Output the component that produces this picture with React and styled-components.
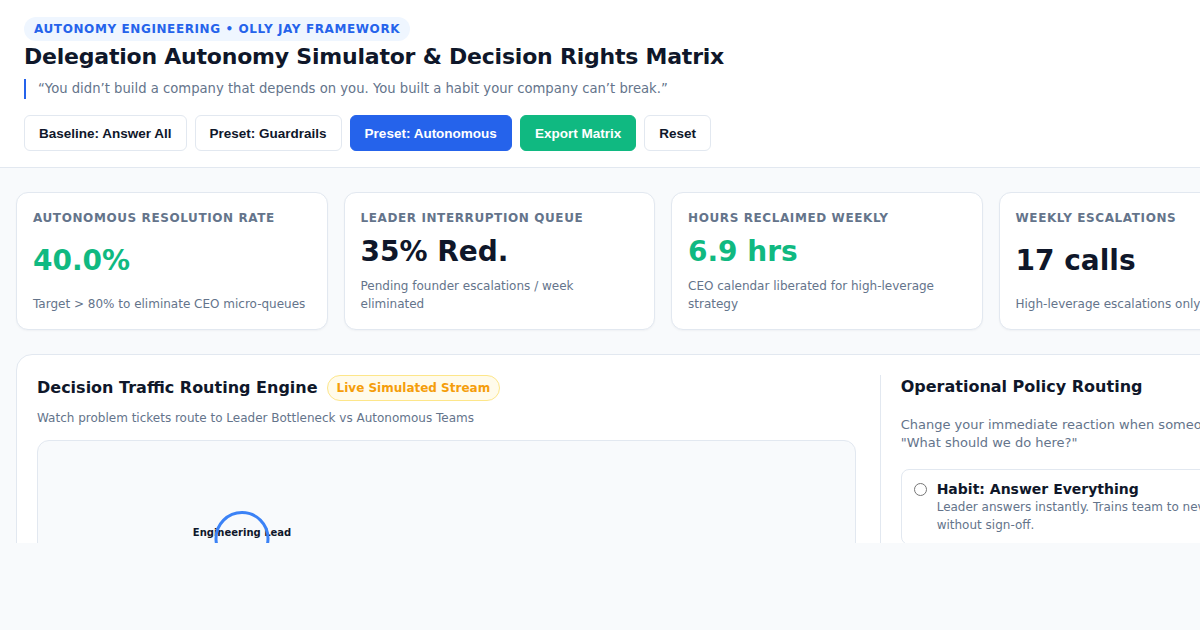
import React from "react";
import styled, { createGlobalStyle } from "styled-components";

const GlobalStyle = createGlobalStyle`
  html, body { margin: 0; padding: 0; background: #f8fafc; overflow: hidden; }
  body { font-family: "DejaVu Sans", "Noto Sans", sans-serif; color: #0f172a; }
  * { box-sizing: border-box; }
`;

const Page = styled.div`
  width: 1326px;
  height: 543px;
  overflow: hidden;
  background: #f8fafc;
`;

const Header = styled.header`
  background: #ffffff;
  border-bottom: 1px solid #e2e8f0;
  padding: 17px 24px 16px;
  display: flex;
  flex-direction: column;
  align-items: flex-start;
`;

const Eyebrow = styled.span`
  display: inline-block;
  padding: 4px 10px;
  border-radius: 999px;
  background: #eff6ff;
  color: #2563eb;
  font-size: 12px;
  line-height: 16px;
  font-weight: 700;
  letter-spacing: 0.05em;
  text-transform: uppercase;
`;

const Title = styled.h1`
  margin: 1px 0 0;
  font-size: 22px;
  line-height: 30px;
  font-weight: 700;
  letter-spacing: -0.01em;
  color: #0f172a;
`;

const Quote = styled.p`
  margin: 7px 0 0;
  border-left: 2px solid #2563eb;
  padding-left: 12px;
  font-size: 13.2px;
  line-height: 20px;
  color: #64748b;
`;

const ButtonRow = styled.div`
  display: flex;
  gap: 8px;
  margin-top: 16px;
`;

const Button = styled.button`
  height: 36px;
  padding: 0 14px;
  border-radius: 6px;
  font-family: "Liberation Sans", Arial, sans-serif;
  font-size: 13.5px;
  font-weight: 700;
  cursor: pointer;
  border: 1px solid
    ${(p) => (p.$variant === "blue" ? "#2563eb" : p.$variant === "green" ? "#10b981" : "#e2e8f0")};
  background: ${(p) => (p.$variant === "blue" ? "#2563eb" : p.$variant === "green" ? "#10b981" : "#ffffff")};
  color: ${(p) => (p.$variant ? "#ffffff" : "#0f172a")};
`;

const Main = styled.main`
  padding: 24px 16px;
`;

const StatGrid = styled.div`
  display: grid;
  grid-template-columns: repeat(4, 1fr);
  gap: 16px;
`;

const StatCard = styled.div`
  background: #ffffff;
  border: 1px solid #e2e8f0;
  border-radius: 12px;
  padding: 16px;
  display: flex;
  flex-direction: column;
  justify-content: space-between;
  gap: 8px;
  box-shadow: 0 1px 2px rgba(15, 23, 42, 0.04);
`;

const StatLabel = styled.div`
  font-size: 12px;
  line-height: 18px;
  font-weight: 700;
  letter-spacing: 0.05em;
  text-transform: uppercase;
  color: #64748b;
`;

const StatValue = styled.div`
  font-size: 28px;
  line-height: 34px;
  font-weight: 700;
  color: ${(p) => p.$color || "#0f172a"};
`;

const StatDesc = styled.div`
  font-size: 12px;
  line-height: 18px;
  color: #64748b;
`;

const Panel = styled.section`
  margin-top: 24px;
  background: #ffffff;
  border: 1px solid #e2e8f0;
  border-radius: 16px;
  padding: 20px;
  display: grid;
  grid-template-columns: 2fr 1fr;
  gap: 24px;
`;

const LeftCol = styled.div`
  display: flex;
  flex-direction: column;
`;

const PanelHead = styled.div`
  display: flex;
  align-items: center;
  gap: 9px;
`;

const PanelTitle = styled.h2`
  margin: 0;
  font-size: 16px;
  line-height: 24px;
  font-weight: 700;
  color: #0f172a;
`;

const LiveBadge = styled.span`
  padding: 4px 9px;
  border-radius: 999px;
  border: 1px solid #fde68a;
  background: #fffbeb;
  color: #f59e0b;
  font-size: 12px;
  line-height: 16px;
  font-weight: 700;
`;

const PanelSub = styled.p`
  margin: 8px 0 0;
  font-size: 12px;
  line-height: 18px;
  color: #64748b;
`;

const Canvas = styled.div`
  margin-top: 13px;
  height: 380px;
  background: #f8fafc;
  border: 1px solid #e2e8f0;
  border-radius: 12px;
  overflow: hidden;
`;

const RightCol = styled.aside`
  border-left: 1px solid #e2e8f0;
  padding-left: 20px;
  display: flex;
  flex-direction: column;
`;

const RightDesc = styled.p`
  margin: 17px 0 0;
  font-size: 13px;
  line-height: 18px;
  color: #64748b;
`;

const OptionList = styled.div`
  margin-top: 17px;
  display: flex;
  flex-direction: column;
  gap: 10px;
`;

const Option = styled.label`
  display: flex;
  align-items: flex-start;
  gap: 10px;
  padding: 10px 12px;
  border: 1px solid #e2e8f0;
  border-radius: 8px;
  background: #ffffff;
`;

const Radio = styled.input`
  margin: 3px 0 0;
  width: 13px;
  height: 13px;
  flex: none;
`;

const OptionText = styled.div`
  display: flex;
  flex-direction: column;
`;

const OptionTitle = styled.div`
  font-size: 14px;
  line-height: 18px;
  font-weight: 700;
  color: #0f172a;
`;

const OptionDesc = styled.div`
  font-size: 12px;
  line-height: 18px;
  color: #64748b;
`;

const stats = [
  {
    label: "Autonomous Resolution Rate",
    value: "40.0%",
    color: "#10b981",
    desc: "Target > 80% to eliminate CEO micro-queues",
  },
  {
    label: "Leader Interruption Queue",
    value: "35% Red.",
    desc: "Pending founder escalations / week eliminated",
  },
  {
    label: "Hours Reclaimed Weekly",
    value: "6.9 hrs",
    color: "#10b981",
    desc: "CEO calendar liberated for high-leverage strategy",
  },
  {
    label: "Weekly Escalations",
    value: "17 calls",
    desc: "High-leverage escalations only",
  },
];

export default function App() {
  return (
    <>
      <GlobalStyle />
      <Page>
        <Header>
          <Eyebrow>Autonomy Engineering • Olly Jay Framework</Eyebrow>
          <Title>Delegation Autonomy Simulator &amp; Decision Rights Matrix</Title>
          <Quote>“You didn’t build a company that depends on you. You built a habit your company can’t break.”</Quote>
          <ButtonRow>
            <Button>Baseline: Answer All</Button>
            <Button>Preset: Guardrails</Button>
            <Button $variant="blue">Preset: Autonomous</Button>
            <Button $variant="green">Export Matrix</Button>
            <Button>Reset</Button>
          </ButtonRow>
        </Header>
        <Main>
          <StatGrid>
            {stats.map((s) => (
              <StatCard key={s.label}>
                <StatLabel>{s.label}</StatLabel>
                <StatValue $color={s.color}>{s.value}</StatValue>
                <StatDesc>{s.desc}</StatDesc>
              </StatCard>
            ))}
          </StatGrid>
          <Panel>
            <LeftCol>
              <PanelHead>
                <PanelTitle>Decision Traffic Routing Engine</PanelTitle>
                <LiveBadge>Live Simulated Stream</LiveBadge>
              </PanelHead>
              <PanelSub>Watch problem tickets route to Leader Bottleneck vs Autonomous Teams</PanelSub>
              <Canvas>
                <svg width="100%" height="100%">
                  <text
                    x="204"
                    y="95"
                    textAnchor="middle"
                    fontFamily="DejaVu Sans, sans-serif"
                    fontSize="10"
                    fontWeight="700"
                    fill="#0f172a"
                  >
                    Engineering Lead
                  </text>
                  <circle cx="204" cy="97.5" r="26" fill="none" stroke="#3b82f6" strokeWidth="3" />
                </svg>
              </Canvas>
            </LeftCol>
            <RightCol>
              <PanelTitle>Operational Policy Routing</PanelTitle>
              <RightDesc>
                Change your immediate reaction when someone asks: "What should we do here?"
              </RightDesc>
              <OptionList>
                <Option>
                  <Radio type="radio" name="policy" />
                  <OptionText>
                    <OptionTitle>Habit: Answer Everything</OptionTitle>
                    <OptionDesc>
                      Leader answers instantly. Trains team to never act without sign-off.
                    </OptionDesc>
                  </OptionText>
                </Option>
              </OptionList>
            </RightCol>
          </Panel>
        </Main>
      </Page>
    </>
  );
}
